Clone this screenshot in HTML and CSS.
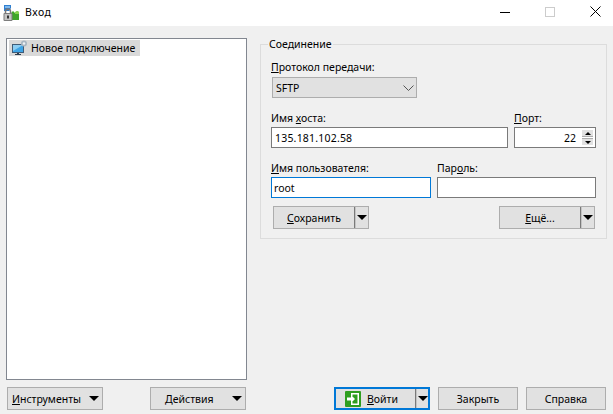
FILE: index.html
```
<!DOCTYPE html>
<html lang="ru">
<head>
<meta charset="utf-8">
<title>Вход</title>
<link rel="stylesheet" href="styles.css">
</head>
<body>
<div class="window">
  <header class="titlebar">
    <svg class="app-icon" width="16" height="16" viewBox="0 0 16 16">
      <path d="M1 0h7v3L6 6H1z" fill="#2f7fd0"/>
      <path d="M2 1h5v2H2z" fill="#7db8ee"/>
      <path d="M8 8l2-2 2 2 2-2 2 1v8H8z" fill="#3fa52b"/>
      <path d="M12 7l2-1 2 1v2h-4z" fill="#86d44f"/>
      <path d="M2.500 8V6.500a2.500 2.500 0 0 1 5 0V8" fill="none" stroke="#777" stroke-width="1.500"/>
      <rect x=".5" y="8" width="9" height="8" rx="1" fill="#7d7d7d"/>
      <rect x="1.500" y="9" width="7" height="6" fill="#c4c4c4"/>
      <rect x="4" y="10.500" width="2" height="3" fill="#333"/>
    </svg>
    <span class="title">Вход</span>
    <div class="controls">
      <svg class="ctl-min" width="10" height="10" viewBox="0 0 10 10"><path d="M0 5.500h10" stroke="#000"/></svg>
      <svg class="ctl-max" width="10" height="10" viewBox="0 0 10 10"><rect x=".5" y=".5" width="9" height="9" fill="none" stroke="#ccc"/></svg>
      <svg class="ctl-close" width="11" height="11" viewBox="0 0 11 11"><path d="M.5.5l10 10M10.500.5l-10 10" stroke="#000" fill="none"/></svg>
    </div>
  </header>
  <main class="content">
    <div class="panes">
      <section class="tree">
        <div class="tree-item">
          <svg width="17" height="16" viewBox="0 0 17 16">
            <path d="M1 4h12v9H1z" fill="#3f5c78"/>
            <path d="M2 5h10v7H2z" fill="#3ea4e6"/>
            <path d="M2 5h10L2 11z" fill="#8ccdf2"/>
            <path d="M6 13h2v1h2v1H4v-1h2z" fill="#2c3e50"/>
            <circle cx="13" cy="3.500" r="3" fill="#a9b6c2"/>
            <circle cx="13" cy="3.500" r="1.200" fill="#eef2f5"/>
          </svg>
          <span>Новое подключение</span>
        </div>
      </section>
      <section class="side">
        <div class="group">
          <div class="legend">Соединение</div>
          <div class="field field-protocol">
            <label class="lbl"><u>П</u>ротокол передачи:</label>
            <div class="select">
              <span>SFTP</span>
              <svg width="11" height="6" viewBox="0 0 11 6"><path d="M.5.500l5 5 5-5" fill="none" stroke="#555"/></svg>
            </div>
          </div>
          <div class="row">
            <div class="field field-host">
              <label class="lbl">Имя <u>х</u>оста:</label>
              <div class="input host">135.181.102.58</div>
            </div>
            <div class="field field-port">
              <label class="lbl"><u>П</u>орт:</label>
              <div class="input port">
                <span class="port-val">22</span>
                <span class="spin">
                  <span class="spin-btn"><i class="tri-up"></i></span>
                  <span class="spin-btn"><i class="tri-down-s"></i></span>
                </span>
              </div>
            </div>
          </div>
          <div class="row">
            <div class="field field-user">
              <label class="lbl"><u>И</u>мя пользователя:</label>
              <div class="input focused">root</div>
            </div>
            <div class="field field-pass">
              <label class="lbl">Пар<u>о</u>ль:</label>
              <div class="input"></div>
            </div>
          </div>
          <div class="group-actions">
            <button class="btn split"><span class="btn-text"><u>С</u>охранить</span><span class="sep"></span><i class="tri"></i></button>
            <button class="btn split"><span class="btn-text"><u>Е</u>щё...</span><span class="sep"></span><i class="tri"></i></button>
          </div>
        </div>
      </section>
    </div>
    <footer class="footer">
      <div class="footer-left">
        <button class="btn menu"><span><u>И</u>нструменты</span><i class="tri"></i></button>
        <button class="btn menu actions"><span><u>Д</u>ействия</span><i class="tri"></i></button>
      </div>
      <div class="footer-right">
        <button class="btn split login">
          <svg width="16" height="16" viewBox="0 0 16 16">
            <rect width="16" height="16" rx="1" fill="#2f9e1f"/>
            <path d="M6 2h8v12H6v-3h1.500v1.500h5v-9h-5V5H6z" fill="#fff"/>
            <path d="M2 6.500h4V4l4 4-4 4V9.500H2z" fill="#fff"/>
          </svg>
          <span class="btn-text"><u>В</u>ойти</span><span class="sep"></span><i class="tri"></i>
        </button>
        <button class="btn plain">Закрыть</button>
        <button class="btn plain">Справка</button>
      </div>
    </footer>
  </main>
</div>
</body>
</html>
```
FILE: styles.css
```
* { box-sizing: border-box; }
html, body { margin: 0; padding: 0; }
body {
  font-family: "Noto Sans", "Liberation Sans", sans-serif;
  font-size: 10.5px;
  line-height: 14px;
  color: #000;
  background: #f0f0f0;
  overflow: hidden;
}
.window { width: 613px; height: 414px; display: flex; flex-direction: column; }
.titlebar {
  height: 26px;
  background: #fff;
  display: flex;
  align-items: center;
  padding: 0 12px 3px 3px;
}
.app-icon { margin-top: 2px; }
.title { margin-left: 6px; letter-spacing: .5px; }
.controls { margin-left: auto; display: flex; align-items: center; gap: 35px; }
.content { flex: 1; padding: 12px 6px 4px 6px; display: flex; flex-direction: column; }
.panes { display: flex; height: 342px; }
.tree {
  width: 241px;
  height: 342px;
  flex: none;
  background: #fff;
  border: 1px solid #828790;
  padding: 1px 2px;
}
.tree-item {
  display: inline-flex;
  align-items: center;
  gap: 3px;
  height: 16px;
  padding: 0 5px 0 2px;
  background: #d9d9d9;
}
.side { margin-left: 13px; width: 347px; flex: none; padding-top: 6px; }
.group {
  height: 195px;
  border: 1px solid #dcdcdc;
  padding: 0 10px;
}
.legend {
  width: fit-content;
  margin: -8px 0 0 -3px;
  padding: 0 1px;
  background: #f0f0f0;
}
.field { display: flex; flex-direction: column; }
.field-protocol { margin-top: 9px; }
.lbl { display: block; margin-bottom: 2px; }
.select {
  width: 145px;
  height: 21px;
  margin: 1px 0 0 1px;
  padding: 0 2px 0 3px;
  background: #e1e1e1;
  border: 1px solid #adadad;
  display: flex;
  align-items: center;
  justify-content: space-between;
}
.row { display: flex; gap: 6px; margin-top: 13px; }
.input {
  height: 21px;
  background: #fff;
  border: 1px solid #7a7a7a;
  padding: 0 3px;
  display: flex;
  align-items: center;
}
.field-host { width: 237px; }
.field-port { width: 82px; }
.field-user { width: 160px; }
.field-pass { width: 159px; }
.host { letter-spacing: .2px; }
.focused { border-color: #0078d7; padding-left: 2px; }
.port { padding: 0 2px 0 3px; justify-content: flex-end; gap: 6px; }
.spin { display: flex; flex-direction: column; gap: 1px; width: 11px; }
.spin-btn { height: 7px; background: #e1e1e1; border-bottom: 1px solid #adadad; display: flex; align-items: center; justify-content: center; }
.spin-btn + .spin-btn { border-bottom: 0; border-top: 1px solid #adadad; }
.tri-up { border: 3px solid transparent; border-top: 0; border-bottom: 3px solid #000; }
.tri-down-s { border: 3px solid transparent; border-bottom: 0; border-top: 3px solid #000; }
.group-actions { display: flex; justify-content: space-between; margin: 8px 1px 0 2px; }
.btn {
  height: 23px;
  width: 96px;
  font: inherit;
  color: #000;
  background: #e1e1e1;
  border: 1px solid #adadad;
  padding: 0;
  display: flex;
  align-items: center;
}
.tri {
  width: 0;
  height: 0;
  border-left: 5px solid transparent;
  border-right: 5px solid transparent;
  border-top: 5px solid #000;
}
.split { padding-right: 1px; }
.split .btn-text { flex: 1; text-align: center; }
.sep { width: 2px; height: 21px; background: linear-gradient(to right, #7a7a7a 50%, #c4c4c4 50%); margin-right: 1px; }
.menu { justify-content: space-between; padding: 0 3px 0 4px; }
.actions span { margin-left: 10px; }
.footer { display: flex; justify-content: space-between; margin-top: 7px; padding: 0 1px; }
.footer-left { display: flex; gap: 47px; }
.footer-right { display: flex; gap: 8px; }
.login { border: 2px solid #0078d7; padding-left: 9px; padding-right: 0; }
.login .btn-text { text-align: left; margin-left: 6px; }
.login .sep { height: 19px; }
.plain { width: 80px; justify-content: center; }
```
